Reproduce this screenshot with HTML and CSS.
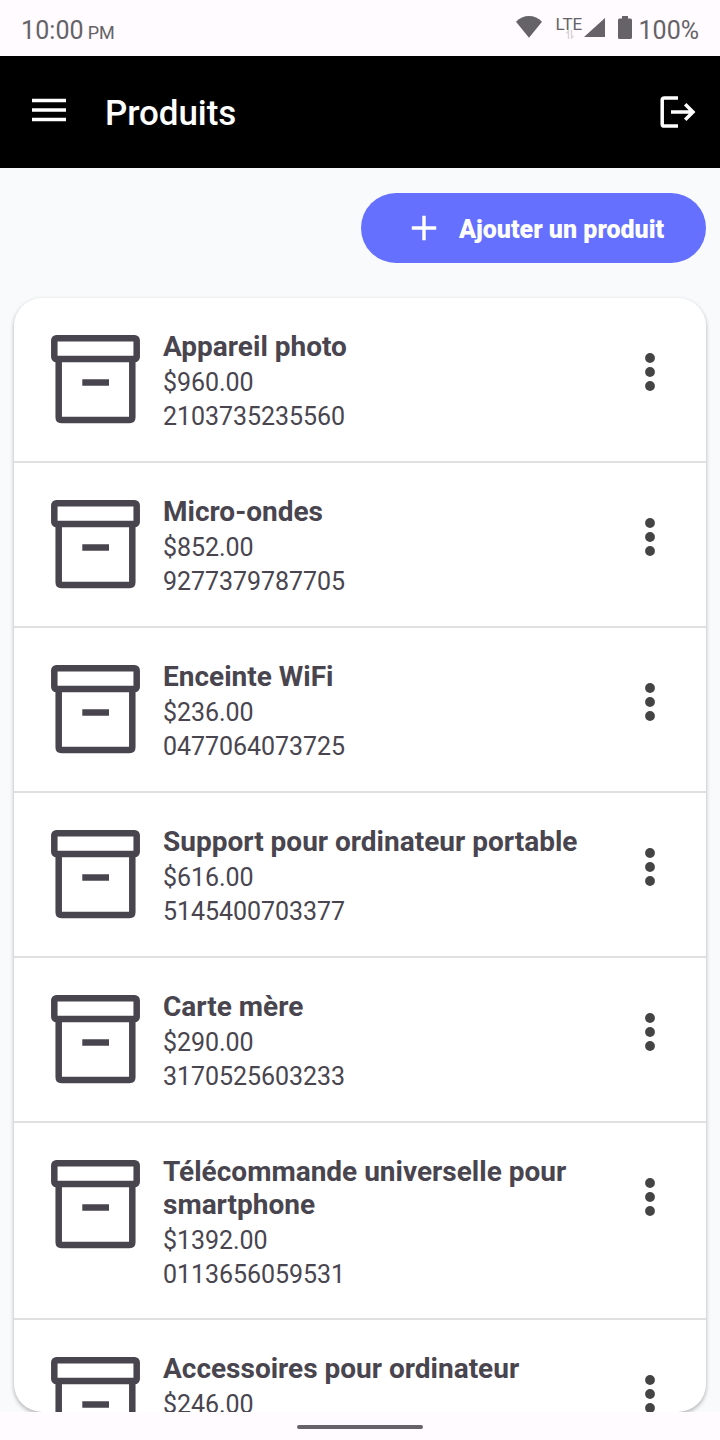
FILE: index.html
```html
<!DOCTYPE html>
<html lang="fr">
<head>
<meta charset="utf-8">
<title>Produits</title>
<link rel="stylesheet" href="styles.css">
</head>
<body>
<svg class="defs" aria-hidden="true">
  <symbol id="box" viewBox="0 0 90 90">
    <g fill="none" stroke="currentColor" stroke-width="6.5">
      <rect x="4.3" y="4.2" width="82.4" height="20.8" rx="2"/>
      <path d="M8.7 25V83.2q0 2.7 2.7 2.7H79.6q2.7 0 2.7-2.7V25M32.3 48.5H59"/>
    </g>
  </symbol>
  <symbol id="dots" viewBox="0 0 10 40">
    <circle cx="5" cy="6" r="4.9"/><circle cx="5" cy="20" r="4.9"/><circle cx="5" cy="34" r="4.9"/>
  </symbol>
</svg>
<div class="phone">
  <header class="status">
    <div class="clock">10:00<span class="ampm">PM</span></div>
    <div class="indicators">
      <svg class="wifi" viewBox="0 0 26 22"><path d="M0 5.7Q5.5 0 13 0T26 5.7L13 21.8Z"/></svg>
      <div class="lte">LTE
        <svg class="traffic" viewBox="0 0 8 9"><path d="M2.5 9V1L.3 3.4M5.5 0v8l2.2-2.4"/></svg>
      </div>
      <svg class="signal" viewBox="0 0 21 19"><path d="M21 0V19H0Z"/></svg>
      <svg class="battery" viewBox="0 0 14 23"><path d="M4 0h6v2.4h2.4q1.6 0 1.6 1.6v17.4q0 1.6-1.6 1.6H1.6Q0 23 0 21.4V4q0-1.6 1.6-1.6H4Z"/></svg>
      <span class="percent">100%</span>
    </div>
  </header>
  <nav class="appbar">
    <svg class="menu" viewBox="0 0 34 24"><path d="M0 2.5H34M0 12H34M0 21.5H34"/></svg>
    <h1 class="title">Produits</h1>
    <svg class="logout" viewBox="0 0 36 34"><path d="M18 2.9H4.4Q2.2 2.9 2.2 5.1V28.9Q2.2 31.1 4.4 31.1H18M11 17H33M25.2 9.2L33 17L25.2 24.8"/></svg>
  </nav>
  <main class="content">
    <button class="add">
      <svg class="plus" viewBox="0 0 26 26"><path d="M13 .8V25.2M.8 13H25.2"/></svg>
      <span class="add-label">Ajouter un produit</span>
    </button>
    <section class="card">
      <article class="row"><svg class="box"><use href="#box"/></svg><div class="info"><h2 class="name">Appareil photo</h2><p class="meta">$960.00</p><p class="meta">2103735235560</p></div><svg class="dots"><use href="#dots"/></svg></article>
      <article class="row"><svg class="box"><use href="#box"/></svg><div class="info"><h2 class="name">Micro-ondes</h2><p class="meta">$852.00</p><p class="meta">9277379787705</p></div><svg class="dots"><use href="#dots"/></svg></article>
      <article class="row"><svg class="box"><use href="#box"/></svg><div class="info"><h2 class="name">Enceinte WiFi</h2><p class="meta">$236.00</p><p class="meta">0477064073725</p></div><svg class="dots"><use href="#dots"/></svg></article>
      <article class="row"><svg class="box"><use href="#box"/></svg><div class="info"><h2 class="name">Support pour ordinateur portable</h2><p class="meta">$616.00</p><p class="meta">5145400703377</p></div><svg class="dots"><use href="#dots"/></svg></article>
      <article class="row"><svg class="box"><use href="#box"/></svg><div class="info"><h2 class="name">Carte mère</h2><p class="meta">$290.00</p><p class="meta">3170525603233</p></div><svg class="dots"><use href="#dots"/></svg></article>
      <article class="row row-tall"><svg class="box"><use href="#box"/></svg><div class="info"><h2 class="name">Télécommande universelle pour smartphone</h2><p class="meta">$1392.00</p><p class="meta">0113656059531</p></div><svg class="dots"><use href="#dots"/></svg></article>
      <article class="row"><svg class="box"><use href="#box"/></svg><div class="info"><h2 class="name">Accessoires pour ordinateur</h2><p class="meta">$246.00</p></div><svg class="dots"><use href="#dots"/></svg></article>
    </section>
  </main>
  <footer class="gesture"><div class="handle"></div></footer>
</div>
</body>
</html>
```
FILE: styles.css
```css
* { box-sizing: border-box; }
body { margin: 0; font-family: Roboto, sans-serif; }
h1, h2, p { margin: 0; }
svg { display: block; flex: none; }
.defs { position: absolute; width: 0; height: 0; }
.phone { width: 720px; height: 1440px; display: flex; flex-direction: column; background: #fffbff; overflow: hidden; }

.status { height: 56px; flex: none; display: flex; justify-content: space-between; padding: 0 21px; color: #656367; fill: #656367; }
.clock { font-size: 25px; line-height: 30px; padding-top: 16px; letter-spacing: .1px; }
.ampm { font-size: 18px; margin-left: 4px; letter-spacing: 0; }
.indicators { display: flex; align-items: flex-start; }
.wifi { width: 26px; height: 22px; margin-top: 16px; }
.lte { position: relative; margin: 14px 0 0 14px; width: 28px; font-size: 17px; line-height: 20px; white-space: nowrap; }
.traffic { position: absolute; left: 10px; top: 16px; width: 8px; height: 9px; fill: none; stroke: #d8d4d8; stroke-width: 1.4; }
.signal { width: 21px; height: 19px; margin-top: 18px; }
.battery { width: 14px; height: 23px; margin: 16px 7px 0 13px; }
.percent { font-size: 25px; line-height: 30px; margin-top: 16px; }

.appbar { height: 112px; flex: none; display: flex; align-items: center; padding: 0 24px 0 32px; background: #000; color: #fff; }
.menu { width: 34px; height: 24px; margin-bottom: 4px; stroke: #fff; stroke-width: 3.6; }
.title { flex: 1; margin-left: 39px; font-size: 35px; line-height: 42px; font-weight: 500; padding-top: 4px; letter-spacing: -.1px; }
.logout { width: 36px; height: 34px; fill: none; stroke: #fff; stroke-width: 3.5; }

.content { height: 1244px; flex: none; padding: 25px 14px 0; display: flex; flex-direction: column; background: #f9fafc; overflow: hidden; }
.add { align-self: flex-end; flex: none; width: 345px; height: 70px; padding: 0 0 0 50px; border: 0; border-radius: 35px; background: #6570ff; color: #fff; display: flex; align-items: center; font-family: inherit; }
.plus { width: 26px; height: 26px; stroke: #fff; stroke-width: 3.4; }
.add-label { margin: 4px 0 0 22px; font-size: 25px; line-height: 30px; font-weight: 900; white-space: nowrap; }

.card { margin-top: 35px; height: 1114px; flex: none; background: #fff; border-radius: 28px; overflow: hidden; box-shadow: 0 2px 4px rgba(0, 0, 0, .3); }
.row { height: 165px; display: flex; align-items: flex-start; padding: 36px 51px 0 36px; border-bottom: 2px solid #e0e0e0; color: #49454f; }
.row-tall { height: 197px; }
.box { width: 90px; height: 90px; }
.info { flex: 1; min-width: 0; margin: -4px 20px 0 23px; }
.name { font-size: 28px; line-height: 33px; font-weight: 700; }
.meta { font-size: 25px; line-height: 34px; letter-spacing: -.05px; }
.name + .meta { padding-top: 3px; }
.dots { width: 10px; height: 40px; margin-top: 18px; fill: #444; }

.gesture { height: 28px; display: flex; justify-content: center; padding-top: 13px; }
.handle { width: 126px; height: 4px; border-radius: 2px; background: #656367; }
```
